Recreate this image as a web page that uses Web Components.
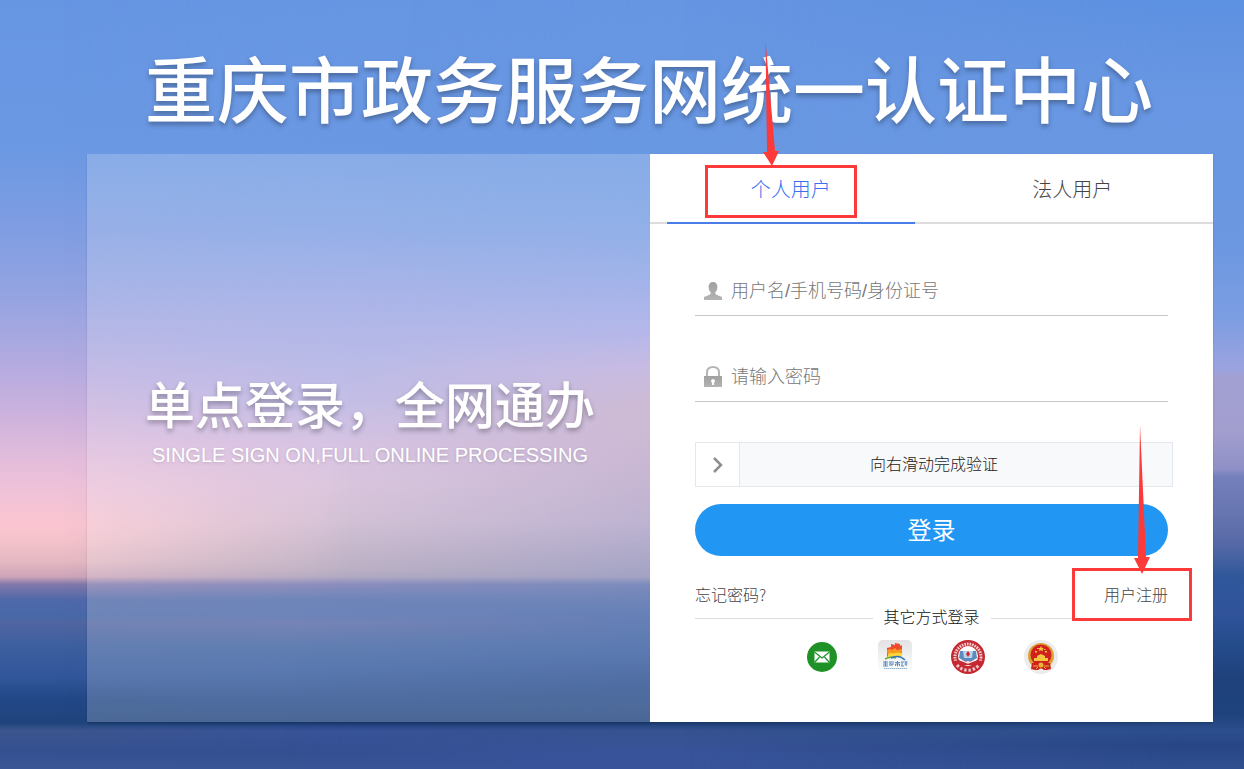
<!DOCTYPE html>
<html lang="zh-CN">
<head>
<meta charset="UTF-8">
<meta name="viewport" content="width=device-width, initial-scale=1.0">
<title>重庆市政务服务网统一认证中心</title>
<style>
  body {
    margin: 0;
    font-family: "Liberation Sans", "Noto Sans CJK SC", sans-serif;
    color: #333;
  }
  h1, h2, p { margin: 0; }
  h1, h2 { font-weight: 500; }
  h1 { font-size: 72px; line-height: 96px; }
  h2 { font-size: 50px; line-height: 60px; }
  p { font-size: 20px; line-height: 36px; text-shadow: 0 1px 3px rgba(0, 0, 0, 0.15); }
</style>
</head>
<body>
<auth-page>
  <h1 slot="title">重庆市政务服务网统一认证中心</h1>
  <h2 slot="slogan">单点登录，全网通办</h2>
  <p slot="slogan">SINGLE SIGN ON,FULL ONLINE PROCESSING</p>
  <login-card></login-card>
</auth-page>

<script>
class AuthPage extends HTMLElement {
  connectedCallback() {
    this.attachShadow({ mode: 'open' });
    this.shadowRoot.innerHTML = `
      <style>
        :host {
          display: block;
          position: relative;
          box-sizing: border-box;
          min-height: 100vh;
          padding: 44px 31px 47px 87px;
          overflow: hidden;
          /* sky, horizon and sea */
          background: linear-gradient(#6695e2 0%, #6c99e3 20%, #809de2 30%, #96a4e1 39%, #b2aae0 47%,
            #cdb2dd 54%, #e4bddb 60%, #f0c2d8 64%, #fac5d0 68%, #f6c3cc 70%, #e5b9c2 73%, #cda4b8 75%,
            #8078ab 76%, #5068a8 78%, #4868a8 80%, #5065a1 81%, #3d5f9f 84%, #31569a 88%, #224786 91%,
            #1f447c 94%, #3c558e 95%, #345091 98%, #3c5796 100%);
        }
        .sky {
          position: absolute;
          inset: 0;
        }
        .haze {
          background: linear-gradient(#6695e2 0%, #6b98e2 20%, #7b9de3 30%, #97a3e3 39%, #a6a9e2 46%,
            #b4aee0 52%, #cdb5dc 58%, #d2b8d6 63%, #c9b3cc 68%, #ae9fb6 74%, #a095b5 75%, #6f72ad 76%,
            #4a67a8 78%, #4866a8 80%, #5565a4 81%, #3b5f9f 84%, #31589d 87%, #24498a 91%,
            #204480 93%, #1d3f79 94%, #38539a 95%, #345091 98%, #3a5597 100%);
          -webkit-mask-image: linear-gradient(to right, transparent 5%, #000 28%);
          mask-image: linear-gradient(to right, transparent 5%, #000 28%);
        }
        .cloud {
          background: linear-gradient(#6695e2 0%, #6998e2 20%, #729be3 28%, #8ba1e4 37%, #a2a6e5 43%,
            #bdaada 48%, #c3aac8 53%, #bba5c8 60%, #ada0c6 68%, #8c8cb5 75%, #5c6fac 76%, #4563a6 79%,
            #31589d 85%, #24498b 89%, #204480 93%, #1d3f79 94%, #36528f 95%, #38539a 98%, #38539a 100%);
          -webkit-mask-image: linear-gradient(100deg, transparent 30%, #000 54%);
          mask-image: linear-gradient(100deg, transparent 30%, #000 54%);
        }
        .dusk {
          background: linear-gradient(#5d91e1 0%, #6896e2 12%, #6c98e1 32%, #7b9de2 41%, #9ba3df 48%,
            #a29fd3 49%, #a29fcf 56%, #8f90c7 61%, #7480bb 62%, #6674b0 67%, #5468a5 71%, #2f579a 75%,
            #30539a 80%, #244b8a 84%, #1f427d 88%, #1f437d 93%, #2c4e8c 95%, #284685 97%, #2f4f90 100%);
          -webkit-mask-image: linear-gradient(to right, transparent 55%, #000 95%);
          mask-image: linear-gradient(to right, transparent 55%, #000 95%);
        }
        header {
          position: relative;
          padding-left: 58px;
          color: #fff;
          white-space: nowrap;
          text-shadow: 0 3px 5px rgba(0, 0, 0, 0.3);
        }
        main {
          position: relative;
          display: grid;
          grid-template-columns: 1fr 1fr;
          margin-top: 14px;
          box-shadow: 0 2px 2px rgba(0, 0, 0, 0.15);
        }
        .slogan {
          display: grid;
          align-content: center;
          justify-content: start;
          padding: 0 0 26px 58px;
          color: #fff;
          text-align: center;
          white-space: nowrap;
          background: rgba(255, 255, 255, 0.2);
          text-shadow: 0 3px 5px rgba(0, 0, 0, 0.3);
        }
      </style>
      <div class="sky haze"></div>
      <div class="sky cloud"></div>
      <div class="sky dusk"></div>
      <header><slot name="title"></slot></header>
      <main>
        <section class="slogan"><slot name="slogan"></slot></section>
        <slot></slot>
      </main>
    `;
  }
}

class LoginCard extends HTMLElement {
  connectedCallback() {
    this.attachShadow({ mode: 'open' });
    this.shadowRoot.innerHTML = `
      <style>
        :host {
          display: block;
          background: #fff;
        }
        nav {
          display: grid;
          grid-template-columns: 1fr 1fr;
          border-bottom: 2px solid #ddd;
        }
        form {
          display: flex;
          flex-direction: column;
          padding: 42px 45px 48px;
        }
        login-field + login-field { margin-top: 36px; }
        slide-verify { margin: 40px -5px 17px 0; }
        .submit {
          height: 52px;
          padding: 0 0 4px;
          border: 0;
          border-radius: 26px;
          background: #2196f3;
          color: #fff;
          font: inherit;
          font-size: 24px;
          cursor: pointer;
        }
        .links {
          display: flex;
          justify-content: space-between;
          margin-top: 26px;
          font-family: "Noto Sans CJK SC", sans-serif;
          font-size: 16px;
          line-height: 24px;
          font-weight: 300;
        }
        .links a {
          color: #444;
          text-decoration: none;
        }
        .register { position: relative; }
        .other {
          display: flex;
          align-items: center;
          gap: 11px;
          font-size: 16px;
          line-height: 24px;
          font-weight: 300;
          color: #111;
        }
        .other::before, .other::after {
          content: "";
          flex: 1;
          height: 1px;
          background: #ddd;
        }
        .options {
          display: flex;
          justify-content: center;
          gap: 39px;
          margin-top: 10px;
        }
      </style>
      <nav role="tablist">
        <user-tab active>个人用户<callout-mark slot="mark" class="tab"></callout-mark></user-tab>
        <user-tab>法人用户</user-tab>
      </nav>
      <form>
        <login-field icon="user" placeholder="用户名/手机号码/身份证号"></login-field>
        <login-field icon="lock" type="password" placeholder="请输入密码"></login-field>
        <slide-verify>向右滑动完成验证</slide-verify>
        <button class="submit" type="button">登录</button>
        <div class="links">
          <a href="#forgot">忘记密码?</a>
          <span class="register"><a href="#register">用户注册</a><callout-mark class="link"></callout-mark></span>
        </div>
        <div class="other">其它方式登录</div>
        <div class="options">
          <login-option name="mail"></login-option>
          <login-option name="city"></login-option>
          <login-option name="social"></login-option>
          <login-option name="nation"></login-option>
        </div>
      </form>
    `;
  }
}

class UserTab extends HTMLElement {
  connectedCallback() {
    this.attachShadow({ mode: 'open' });
    this.shadowRoot.innerHTML = `
      <style>
        :host {
          display: block;
          position: relative;
          padding: 0 17px;
        }
        button {
          display: block;
          width: 100%;
          height: 70px;
          margin-bottom: -2px;
          padding: 0;
          border: 0;
          border-bottom: 2px solid transparent;
          background: none;
          font: inherit;
          font-size: 20px;
          font-weight: 300;
          color: #444;
          cursor: pointer;
        }
        :host([active]) button {
          border-bottom-color: #4a7de8;
          color: #3a6ff0;
        }
      </style>
      <button type="button" role="tab" aria-selected="${this.hasAttribute('active')}"><slot></slot></button>
      <slot name="mark"></slot>
    `;
  }
}

const fieldIcons = {
  user: `<path fill="url(#g)" d="M9 2c3 0 4.400 2 4.400 5 0 2.200-.8 4-2 5.200-.6 1 .2 2.300 1.600 2.800l5 2V20H0v-3l5-2c1.400-.5 2.200-1.800 1.600-2.800-1.200-1.200-2-3-2-5.200 0-3 1.400-5 4.400-5z"/>`,
  lock: `<path fill="none" stroke="#b5b5b5" stroke-width="2" d="M3 10V6.500C3 3 5.500 1 9 1s6 2 6 5.500V10"/>
    <path fill="url(#g)" d="M0 10h18v11H0z"/><path fill="#fff" d="M9 13a2 2 0 0 1 1 3.700V19H8v-2.300a2 2 0 0 1 1-3.700z"/>`
};

class LoginField extends HTMLElement {
  connectedCallback() {
    const icon = this.getAttribute('icon');
    const text = this.getAttribute('placeholder');
    this.attachShadow({ mode: 'open' });
    this.shadowRoot.innerHTML = `
      <style>
        :host {
          display: flex;
          align-items: center;
          height: 49px;
          padding-left: 9px;
          border-bottom: 1px solid #c8c8c8;
        }
        label { display: flex; }
        svg { display: block; }
        input {
          flex: 1;
          min-width: 0;
          height: 100%;
          box-sizing: border-box;
          padding: 2px 9px 0;
          border: 0;
          outline: 0;
          background: none;
          font: inherit;
          font-size: 18px;
          font-weight: 300;
          color: #333;
        }
        input::placeholder { color: #777; opacity: 1; }
      </style>
      <label for="box" aria-label="${text}">
        <svg width="18" height="22" viewBox="0 0 18 22">
          <linearGradient id="g" x1="0" y1="0" x2="0" y2="1">
            <stop offset="0" stop-color="#a0a0a0"/><stop offset="1" stop-color="#b4b4b4"/>
          </linearGradient>
          ${fieldIcons[icon]}
        </svg>
      </label>
      <input id="box" type="${this.getAttribute('type') || 'text'}" placeholder="${text}">
    `;
  }
}

class SlideVerify extends HTMLElement {
  connectedCallback() {
    this.attachShadow({ mode: 'open' });
    this.shadowRoot.innerHTML = `
      <style>
        :host {
          display: grid;
          height: 43px;
          border: 1px solid #e4e7eb;
          background: #f7f9fa;
        }
        label, input, svg { grid-area: 1 / 1; }
        label {
          place-self: center;
          font-size: 16px;
          line-height: 24px;
          font-weight: 300;
          color: #222;
        }
        input {
          -webkit-appearance: none;
          appearance: none;
          width: 100%;
          height: 100%;
          margin: 0;
          background: none;
          outline: 0;
        }
        input::-webkit-slider-thumb {
          -webkit-appearance: none;
          width: 44px;
          height: 43px;
          border-right: 1px solid #e4e7eb;
          background: #fff;
          cursor: pointer;
        }
        svg {
          align-self: center;
          margin-left: 16px;
          z-index: 1;
          pointer-events: none;
        }
      </style>
      <label for="range"><slot></slot></label>
      <input id="range" type="range" min="0" max="100" value="0">
      <svg width="12" height="18" viewBox="0 0 12 18" fill="none" stroke="#8e8e8e" stroke-width="2.500">
        <path d="M2 2l7 7-7 7"/>
      </svg>
    `;
    // Let go before the end and the handle goes back
    const range = this.shadowRoot.querySelector('input');
    const arrow = this.shadowRoot.querySelector('svg');
    range.addEventListener('input', () => {
      arrow.style.transform = `translateX(${(range.clientWidth - 44) * range.value / 100}px)`;
    });
    range.addEventListener('change', () => {
      if (range.value < 100) {
        range.value = 0;
        arrow.style.transform = '';
      }
    });
  }
}

const optionIcons = {
  mail: ['邮箱登录', `
    <circle cx="17" cy="17" r="15" fill="#1e9127"/>
    <rect x="9.500" y="11.500" width="15" height="11" fill="#fff"/>
    <path fill="none" stroke="#1e9127" stroke-width="1.200" d="M9.500 12l7.500 6 7.500-6M9.500 22.500l5-5.500M24.500 22.500l-5-5.500"/>`],
  city: ['重庆市政府登录', `
    <linearGradient id="c" x1="0" y1="0" x2="0" y2="1">
      <stop offset="0" stop-color="#e2e2e4"/><stop offset=".8" stop-color="#fafafa"/><stop offset="1" stop-color="#fff"/>
    </linearGradient>
    <rect width="34" height="34" rx="5" fill="url(#c)"/>
    <path fill="#ee4a2b" d="M9 8l4-1V4l4 1V3l5 1v2l2-1v8l-7 3-8 1z"/>
    <path fill="#f79a22" d="M9 10l3-1 2 1 3-2 2 2 5-1-1 8H10z"/>
    <path fill="#fdd43b" d="M11 13c4 1 7-1 12 0l1 5c-5-3-9-2-15 0z"/>
    <path fill="none" stroke="#69af3d" stroke-width="1.500" d="M7 19c5-3 8-2 11-1"/>
    <path fill="none" stroke="#2a76bd" stroke-width="1.500" d="M13 18c6-3 11-1 14 2"/>
    <path fill="none" stroke="#5b8fc4" d="M5 22h5M7.500 21v5M5 24h5M5 26h5M11 22h5M12 22v4M12 24h4M14 24v2M17 22.500h5M19.500 21v5.500M17.500 26v-2h4v2M23 22h3M24 22v4M23 26h3M26.500 22h3M28 21v5M26.500 24h3"/>
    <path stroke="#8fb4d4" stroke-dasharray="1.500 .5" d="M6 28.500h23"/>`],
  social: ['社会保障卡登录', `
    <circle cx="17" cy="17" r="17" fill="#c42932"/>
    <circle cx="17" cy="17" r="13" fill="none" stroke="#f3cfd1" stroke-width="3" stroke-dasharray="1.600 1"/>
    <path fill="#c42932" d="M2 21l9-1 6 3 6-3 9 1-4 9-11 3-11-3z"/>
    <circle cx="17" cy="16" r="10" fill="#fff"/>
    <path fill="#5c8bbd" d="M9 11h16l1 7-5 3h-8l-5-3z"/>
    <path fill="#b9d3e9" d="M12 11h10l-1 7h-8z"/>
    <path fill="#d6242c" d="M17 11l2 3-2 3-2-3z"/>
    <path fill="#c42932" d="M7 20l7 1 3 1 3-1 7-1-4 5H11z"/>
    <path fill="none" stroke="#fff" stroke-width="1.200" d="M9 20l5 2 3 1 3-1 5-2"/>
    <path fill="none" stroke="#f0c2c4" stroke-width="3" stroke-dasharray="2.500 1.800" d="M6 25c6 7 16 7 22 0"/>`],
  nation: ['国家政务服务平台登录', `
    <circle cx="17" cy="17" r="17" fill="#ececec"/>
    <circle cx="17" cy="16" r="13" fill="#d9a336"/>
    <circle cx="17" cy="15" r="10.500" fill="#d0211f"/>
    <path fill="#f4c63c" d="M17 6l1 2h2l-1.500 1.300.5 2-2-1.100-2 1.100.5-2L14 8h2zM11 11h2v1.500h-2zM21 11h2v1.500h-2zM13 8h1.500v1H13zM20 9h1.500v1H20zM13 16l4-2 4 2v2h3v3H10v-3h3z"/>
    <path fill="#d0211f" d="M8 23h18l1 6-4 1h-3l-3-2-3 2h-3l-4-1z"/>
    <circle cx="17" cy="25" r="2.500" fill="#e8b53a"/>
    <path stroke="#e8b53a" d="M9 26h5M20 26h5M12 29l2-2M22 29l-2-2"/>`]
};

class LoginOption extends HTMLElement {
  connectedCallback() {
    const [title, art] = optionIcons[this.getAttribute('name')];
    this.attachShadow({ mode: 'open' });
    this.shadowRoot.innerHTML = `
      <style>
        :host, a, svg { display: block; }
      </style>
      <a href="#${this.getAttribute('name')}" aria-label="${title}">
        <svg width="34" height="34" viewBox="0 0 34 34">${art}</svg>
      </a>
    `;
  }
}

// Red frame with a long arrow that points at its top edge
class CalloutMark extends HTMLElement {
  connectedCallback() {
    this.attachShadow({ mode: 'open' });
    this.shadowRoot.innerHTML = `
      <style>
        :host {
          position: absolute;
          box-sizing: border-box;
          border: 3px solid #fc3a3a;
          pointer-events: none;
          z-index: 2;
        }
        :host(.tab) {
          width: 152px;
          height: 53px;
          left: 55px;
          top: 11px;
        }
        :host(.link) {
          width: 120px;
          height: 53px;
          right: -24px;
          top: -14px;
        }
        svg {
          position: absolute;
          bottom: 49px;
          left: 55px;
        }
        :host(.link) svg {
          left: 59px;
          bottom: 44px;
        }
      </style>
      ${this.className === 'tab'
        ? `<svg width="16" height="125" viewBox="0 0 16 125"><path fill="#fc3a3a" d="M2.500 0L12 110h4l-7 15-9-14h4z"/></svg>`
        : `<svg width="16" height="149" viewBox="0 0 16 149"><path fill="#fc3a3a" d="M6 0L12 132h4l-8 17-8-16h4z"/></svg>`}
    `;
  }
}

customElements.define('callout-mark', CalloutMark);
customElements.define('login-option', LoginOption);
customElements.define('slide-verify', SlideVerify);
customElements.define('login-field', LoginField);
customElements.define('user-tab', UserTab);
customElements.define('login-card', LoginCard);
customElements.define('auth-page', AuthPage);
</script>
</body>
</html>
